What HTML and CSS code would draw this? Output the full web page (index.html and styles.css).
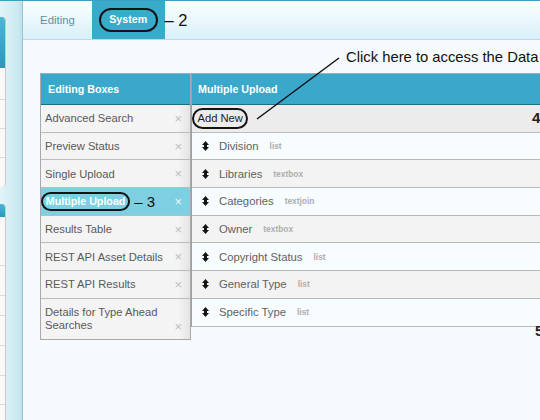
FILE: index.html
```html
<!DOCTYPE html>
<html>
<head>
<meta charset="utf-8">
<link rel="stylesheet" href="styles.css">
</head>
<body>
<div class="page">
  <aside class="side">
    <div class="card card-1">
      <div class="card-head"></div>
      <div class="card-row h32"></div>
      <div class="card-row h29"></div>
      <div class="card-row h29"></div>
      <div class="card-row last h29"></div>
    </div>
    <div class="card card-2">
      <div class="card-head short"></div>
      <div class="card-row h49"></div>
      <div class="card-row h30"></div>
      <div class="card-row h20"></div>
      <div class="card-row h30"></div>
      <div class="card-row h30"></div>
      <div class="card-row h29"></div>
      <div class="card-row h29"></div>
    </div>
  </aside>
  <main class="main">
    <nav class="tabs">
      <a class="tab">Editing</a>
      <a class="tab active"><span class="pill pill-tab">System</span></a>
      <span class="note note-tab">– 2</span>
    </nav>
    <section class="content">
      <div class="boxes">
        <div class="head head-left">Editing Boxes</div>
        <div class="box-row"><span class="box-name">Advanced Search</span><span class="x">×</span></div>
        <div class="box-row"><span class="box-name">Preview Status</span><span class="x">×</span></div>
        <div class="box-row"><span class="box-name">Single Upload</span><span class="x">×</span></div>
        <div class="box-row selected"><span class="box-name"><span class="pill pill-sel">Multiple Upload</span><span class="note note-row">– 3</span></span><span class="x">×</span></div>
        <div class="box-row"><span class="box-name">Results Table</span><span class="x">×</span></div>
        <div class="box-row"><span class="box-name">REST API Asset Details</span><span class="x">×</span></div>
        <div class="box-row"><span class="box-name">REST API Results</span><span class="x">×</span></div>
        <div class="box-row tall"><span class="box-name">Details for Type Ahead Searches</span><span class="x">×</span></div>
      </div>
      <div class="fields">
        <div class="head head-right">Multiple Upload</div>
        <div class="add-row"><span class="pill pill-add">Add New</span></div>
        <div class="field-row light"><svg class="sort" width="7" height="10" viewBox="0 0 7 10"><path d="M3.5 0L7 4H5V6H7L3.5 10L0 6H2V4H0Z"/></svg><span class="fname">Division</span><span class="ftype">list</span></div>
        <div class="field-row gray"><svg class="sort" width="7" height="10" viewBox="0 0 7 10"><path d="M3.5 0L7 4H5V6H7L3.5 10L0 6H2V4H0Z"/></svg><span class="fname">Libraries</span><span class="ftype">textbox</span></div>
        <div class="field-row light"><svg class="sort" width="7" height="10" viewBox="0 0 7 10"><path d="M3.5 0L7 4H5V6H7L3.5 10L0 6H2V4H0Z"/></svg><span class="fname">Categories</span><span class="ftype">textjoin</span></div>
        <div class="field-row gray"><svg class="sort" width="7" height="10" viewBox="0 0 7 10"><path d="M3.5 0L7 4H5V6H7L3.5 10L0 6H2V4H0Z"/></svg><span class="fname">Owner</span><span class="ftype">textbox</span></div>
        <div class="field-row light"><svg class="sort" width="7" height="10" viewBox="0 0 7 10"><path d="M3.5 0L7 4H5V6H7L3.5 10L0 6H2V4H0Z"/></svg><span class="fname">Copyright Status</span><span class="ftype">list</span></div>
        <div class="field-row gray"><svg class="sort" width="7" height="10" viewBox="0 0 7 10"><path d="M3.5 0L7 4H5V6H7L3.5 10L0 6H2V4H0Z"/></svg><span class="fname">General Type</span><span class="ftype">list</span></div>
        <div class="field-row light"><svg class="sort" width="7" height="10" viewBox="0 0 7 10"><path d="M3.5 0L7 4H5V6H7L3.5 10L0 6H2V4H0Z"/></svg><span class="fname">Specific Type</span><span class="ftype">list</span></div>
      </div>
    </section>
  </main>
  <svg class="pointer" width="540" height="420" viewBox="0 0 540 420"><line x1="339" y1="57" x2="257" y2="118"/></svg>
  <div class="callout">Click here to access the Data</div>
  <div class="num num-4">4</div>
  <div class="num num-5">5</div>
</div>
</body>
</html>
```

FILE: styles.css
```css
* { box-sizing: border-box; }
html, body { margin: 0; padding: 0; }
body {
  width: 540px;
  height: 420px;
  overflow: hidden;
  font-family: "Liberation Sans", Arial, sans-serif;
  background: #f5fbfd;
}
.page {
  position: relative;
  display: flex;
  width: 540px;
  height: 420px;
  overflow: hidden;
  border-top: 1px solid #3d9fc1;
}

/* left strip */
.side {
  width: 23px;
  flex: none;
  padding-top: 16px;
  background: linear-gradient(to right, #e2f4f9, #cbe9f1 80%, #bfe1eb);
  border-right: 1px solid #93c8d9;
}
.card {
  width: 6px;
  background: #f9f9f9;
  border-right: 1px solid #c9c9c9;
  border-radius: 0 4px 4px 0;
  overflow: hidden;
}
.card-2 { margin-top: 17px; border-radius: 0 4px 0 0; }
.card-head {
  height: 51px;
  background: linear-gradient(#4db6d6, #2d95bb);
}
.card-head.short { height: 13px; }
.card-row { border-bottom: 1px solid #dcdcdc; }
.card-row.last { border-bottom: none; }
.h20 { height: 20px; } .h29 { height: 29px; } .h30 { height: 30px; } .h32 { height: 32px; } .h49 { height: 49px; }

/* main */
.main {
  flex: 1;
  display: flex;
  flex-direction: column;
  min-width: 0;
}
.tabs {
  height: 39px;
  flex: none;
  display: flex;
  align-items: stretch;
  background: linear-gradient(#fbfeff, #d8f0f8);
  border-bottom: 1px solid #b6dce9;
}
.tab {
  display: flex;
  align-items: center;
  justify-content: center;
  font-size: 11.4px;
  color: #5d8fa6;
}
.tab:first-child { width: 69px; }
.tab.active { width: 72.5px; background: #38abca; }
.pill {
  display: inline-block;
  border: 2px solid #141414;
  border-radius: 12px;
}
.pill-tab {
  color: #fff;
  font-weight: bold;
  font-size: 10.7px;
  line-height: 19.5px;
  padding: 0 8.7px;
}
.note {
  font-size: 15px;
  color: #111;
  white-space: nowrap;
}
.note-tab { align-self: center; margin-left: 0; font-size: 16.5px; }

.content {
  flex: 1;
  display: flex;
  align-items: flex-start;
  padding: 33px 0 0 17px;
}

/* editing boxes */
.boxes {
  width: 151px;
  flex: none;
  border: 1px solid #a9a9a9;
  border-top-color: #8ab6c6;
  background: #f4f4f4;
}
.head {
  height: 31px;
  display: flex;
  align-items: center;
  background: #3aa8cb;
  border-bottom: 1px solid #1f6c87;
  color: #fff;
  font-weight: bold;
  font-size: 10.7px;
}
.head-left { padding-left: 7px; }
.box-row {
  height: 27.7px;
  display: flex;
  align-items: center;
  justify-content: space-between;
  padding: 0 8px 0 4px;
  border-bottom: 1px solid #bcbcbc;
  background: linear-gradient(to right, #f4f4f4 92%, #e4e4e4);
  font-size: 11.2px;
  color: #595959;
}
.box-row.tall {
  height: 40px;
  align-items: flex-start;
  padding-top: 7px;
  line-height: 13.5px;
  border-bottom: none;
}
.box-row.tall .box-name { width: 125px; }
.box-row.tall .x { margin-top: 14px; }
.box-row.selected { background: #7ecfe1; }
.box-name { display: flex; align-items: center; }
.x { color: #bdbdbd; font-size: 13px; line-height: 1; }
.selected .x { color: #e8f7fb; }
.pill-sel {
  margin-left: -4px;
  color: #fff;
  font-weight: bold;
  font-size: 10.7px;
  line-height: 14.7px;
  padding: 0 2.8px;
  border-radius: 10px;
}
.note-row { margin-left: 4px; }

/* fields */
.fields {
  width: 360px;
  flex: none;
  border-top: 1px solid #8ab6c6;
  border-left: 1px solid #a0a0a0;
}
.head-right { padding-left: 6px; }
.add-row {
  height: 27.7px;
  display: flex;
  align-items: center;
  background: #ececec;
  border-bottom: 1px solid #bcbcbc;
}
.pill-add {
  color: #222;
  font-size: 11.2px;
  line-height: 17.6px;
  padding: 0 3.5px;
  margin-left: 0;
}
.field-row {
  height: 27.7px;
  display: flex;
  align-items: center;
  padding-left: 10px;
  border-bottom: 1px solid #b9b9b9;
}
.field-row.light { background: #f7fcfe; }
.field-row.gray { background: #f3f3f3; }
.sort { fill: #141414; margin-right: 10px; flex: none; }
.fname { font-size: 11.3px; color: #626262; }
.ftype { font-size: 8.4px; font-weight: bold; color: #aeaeae; margin-left: 11px; }

/* annotations */
.pointer {
  position: absolute;
  left: 0;
  top: 0;
  pointer-events: none;
}
.pointer line { stroke: #111; stroke-width: 1.5; }
.callout {
  position: absolute;
  left: 346px;
  top: 48px;
  font-size: 14.8px;
  line-height: 17px;
  color: #111;
  white-space: nowrap;
}
.num {
  position: absolute;
  font-size: 15px;
  font-weight: bold;
  color: #222;
}
.num-4 { left: 532px; top: 108px; }
.num-5 { left: 535px; top: 321px; }
```
